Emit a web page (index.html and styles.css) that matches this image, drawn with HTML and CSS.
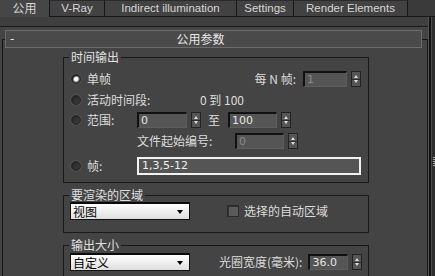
FILE: index.html
```html
<!DOCTYPE html>
<html>
<head>
<meta charset="utf-8">
<link rel="stylesheet" href="styles.css">
</head>
<body>
<div class="window">
  <div class="tabs">
    <div class="tab active w1">公用</div>
    <div class="tab w2">V-Ray</div>
    <div class="tab w3">Indirect illumination</div>
    <div class="tab w4">Settings</div>
    <div class="tab w5">Render Elements</div>
    <div class="tab-fill"></div>
  </div>
  <div class="body">
    <div class="main">
      <div class="rollout">
        <div class="roll-head"><span class="minus">-</span><span class="roll-title">公用参数</span></div>
        <fieldset class="group g1">
          <legend>时间输出</legend>
          <div class="row r1">
            <span class="radio on"></span><span class="lbl">单帧</span>
            <span class="spacer"></span>
            <span class="txt">每 N 帧:</span>
            <span class="spin w44 dim">1</span><span class="arrows"></span>
          </div>
          <div class="row r2">
            <span class="radio"></span><span class="lbl wide">活动时间段:</span>
            <span class="txt range">0 到 100</span>
          </div>
          <div class="row r3">
            <span class="radio"></span><span class="lbl">范围:</span>
            <span class="spin w50">0</span><span class="arrows"></span>
            <span class="txt to">至</span>
            <span class="spin w49">100</span><span class="arrows"></span>
          </div>
          <div class="row r4">
            <span class="txt start">文件起始编号:</span>
            <span class="spin w49 dim">0</span><span class="arrows"></span>
          </div>
          <div class="row r5">
            <span class="radio"></span><span class="lbl">帧:</span>
            <span class="frames">1,3,5-12</span>
          </div>
        </fieldset>
        <fieldset class="group g2">
          <legend>要渲染的区域</legend>
          <div class="row r6">
            <span class="drop">视图<span class="caret"></span></span>
            <span class="check"></span><span class="txt">选择的自动区域</span>
          </div>
        </fieldset>
        <fieldset class="group g3">
          <legend>输出大小</legend>
          <div class="row r7">
            <span class="drop">自定义<span class="caret"></span></span>
            <span class="txt aperture">光圈宽度(毫米):</span>
            <span class="spin w40">36.0</span><span class="arrows"></span>
          </div>
        </fieldset>
      </div>
    </div>
    <div class="scroll"><span class="grip"></span></div>
  </div>
</div>
</body>
</html>
```
FILE: styles.css
```css
html, body {
  margin: 0;
  padding: 0;
  background: #444444;
}
.window {
  width: 435px;
  height: 276px;
  overflow: hidden;
  background: #444444;
  color: #dcdcdc;
  font-family: "Noto Sans CJK SC", "Liberation Sans", sans-serif;
  font-size: 12px;
  line-height: 14px;
}
.tabs {
  display: flex;
  height: 17px;
  background: #3a3a3a;
}
.tab {
  box-sizing: border-box;
  height: 17px;
  border-left: 1px solid #161616;
  border-bottom: 1px solid #161616;
  border-top: 1px solid #2a2a2a;
  background: #424242;
  text-align: center;
  font-family: "Liberation Sans", sans-serif;
  font-size: 11.5px;
  line-height: 15px;
  color: #d6d6d6;
}
.tab.active {
  border: none;
  background: #464646;
  font-family: "Noto Sans CJK SC", sans-serif;
  font-size: 12px;
  line-height: 15px;
}
.w1 { width: 49px; }
.w2 { width: 55px; }
.w3 { width: 132px; }
.w4 { width: 57px; }
.w5 { width: 115px; border-right: 1px solid #161616; }
.tab-fill {
  flex: 1;
  border-bottom: 1px solid #161616;
}
.body {
  display: flex;
  height: 259px;
}
.main {
  width: 428px;
  padding-top: 22px;
  background: #444444;
  box-shadow: inset 0 9px 0 #3f3f3f, inset 0 10px 0 #1a1a1a;
}
.rollout {
  margin-left: 2px;
  border-left: 1px solid #161616;
  border-right: 1px solid #161616;
  border-top: 1px solid #161616;
  height: 300px;
}
.roll-head {
  display: flex;
  align-items: center;
  position: relative;
  box-sizing: border-box;
  margin: -10px 5px 0 2px;
  height: 18px;
  border: 1px solid #6c6c6c;
  background: #4a4a4a;
  color: #e8e8e8;
}
.minus {
  width: 16px;
  padding-left: 4px;
  box-sizing: border-box;
  font-family: "DejaVu Sans", sans-serif;
}
.roll-title {
  flex: 1;
  text-align: center;
  padding-right: 42px;
}
.group {
  box-sizing: border-box;
  margin: 0 0 0 60px;
  padding: 0 0 0 0;
  width: 306px;
  border: 1px solid #1a1a1a;
  min-inline-size: 0;
}
.group legend {
  margin-left: 5px;
  padding: 0 2px;
  line-height: 14px;
  color: #e0e0e0;
}
.g1 { margin-top: 2px; height: 133px; }
.g2 { margin-top: 5px; height: 45px; }
.g3 { margin-top: 5px; height: 60px; }
.row {
  display: flex;
  align-items: center;
  height: 16px;
  padding-left: 7px;
}
.r1 { margin-top: 7px; padding-right: 7px; }
.r2 { margin-top: 5px; }
.r3 { margin-top: 4px; }
.r4 { margin-top: 5px; padding-left: 73px; }
.r5 { margin-top: 8px; height: 18px; }
.r6 { margin-top: 0px; height: 18px; padding-left: 6px; }
.r7 { margin-top: 1px; height: 18px; padding-left: 6px; }
.radio {
  box-sizing: border-box;
  width: 10px;
  height: 10px;
  border-radius: 50%;
  background: #333;
  border: 1px solid #2a2a2a;
  box-shadow: inset 1px 1px 1px #222, 0 0 0 1px #505050;
  margin-right: 6px;
  flex: none;
}
.radio.on {
  background: radial-gradient(circle, #ffffff 0, #f0f0f0 2px, #777 3px, #3a3a3a 4px);
}
.lbl {
  width: 50px;
  flex: none;
}
.lbl.wide { width: 113px; }
.spacer { flex: 1; }
.txt { flex: none; }
.spin {
  box-sizing: border-box;
  height: 16px;
  background: #555555;
  border-top: 2px solid #111;
  border-left: 2px solid #111;
  border-bottom: 1px solid #5e5e5e;
  border-right: 1px solid #5e5e5e;
  padding-left: 2px;
  font-family: "DejaVu Sans", sans-serif;
  font-size: 11px;
  line-height: 13px;
  color: #e4e4e4;
  flex: none;
}
.spin.dim { color: #8a8a8a; }
.w44 { width: 44px; margin-left: 7px; }
.w50 { width: 50px; }
.w49 { width: 49px; }
.w40 { width: 40px; margin-left: 6px; }
.arrows {
  box-sizing: border-box;
  width: 10px;
  height: 16px;
  margin-left: 4px;
  background:
    linear-gradient(to bottom, transparent 7px, #2c2c2c 7px, #2c2c2c 8px, transparent 8px),
    #555;
  border: 1px solid #222;
  position: relative;
  flex: none;
}
.arrows::before, .arrows::after {
  content: "";
  position: absolute;
  left: 2px;
  border-left: 2px solid transparent;
  border-right: 2px solid transparent;
}
.arrows::before {
  top: 3px;
  border-bottom: 3px solid #ddd;
}
.arrows::after {
  bottom: 3px;
  border-top: 3px solid #ddd;
}
.range { font-family: "Noto Sans CJK SC", sans-serif; font-size: 12px; }
.to { width: 27px; padding-left: 7px; box-sizing: border-box; }
.start { width: 98px; }
.frames {
  box-sizing: border-box;
  width: 224px;
  height: 18px;
  border: 2px solid #f2f2f2;
  background: #555;
  padding-left: 3px;
  font-family: "DejaVu Sans", sans-serif;
  font-size: 11px;
  line-height: 14px;
  color: #f0f0f0;
}
.drop {
  box-sizing: border-box;
  width: 120px;
  height: 18px;
  border: 1px solid #111;
  border-top: 2px solid #0a0a0a;
  background: linear-gradient(to bottom, #ffffff, #dedede);
  color: #000;
  padding-left: 2px;
  line-height: 15px;
  position: relative;
  flex: none;
}
.caret {
  position: absolute;
  right: 6px;
  top: 6px;
  border-left: 3px solid transparent;
  border-right: 3px solid transparent;
  border-top: 4px solid #000;
}
.check {
  box-sizing: border-box;
  width: 12px;
  height: 12px;
  margin-left: 37px;
  margin-right: 5px;
  background: #5a5a5a;
  border: 1px solid #2a2a2a;
  box-shadow: inset 1px 1px 0 #333;
  flex: none;
}
.aperture { margin-left: 29px; }
.scroll {
  width: 7px;
  position: relative;
  background: linear-gradient(to right, #555 0, #555 1px, #111 1px, #111 3px, #4e4e4e 3px, #4e4e4e 4px, #2e2e2e 4px);
}
.grip {
  position: absolute;
  right: 0;
  top: 140px;
  width: 2px;
  height: 9px;
  background: repeating-linear-gradient(to bottom, #aaa 0, #aaa 1px, transparent 1px, transparent 2px);
}
```
